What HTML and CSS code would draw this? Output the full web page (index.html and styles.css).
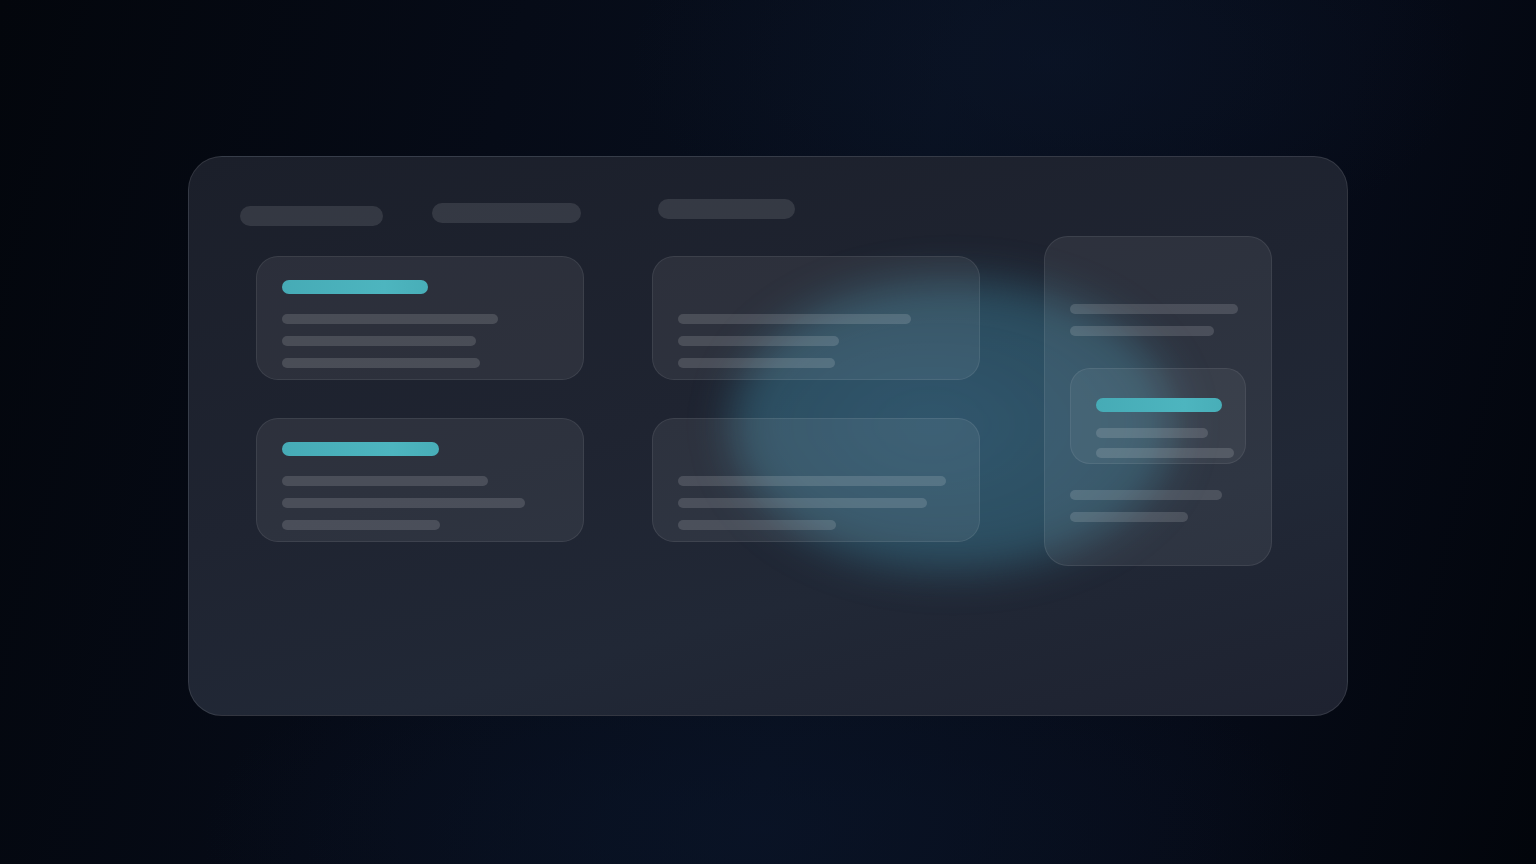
FILE: index.html
```html
<!DOCTYPE html>
<html lang="en">
<head>
<meta charset="utf-8">
<title>Dashboard skeleton</title>
<link rel="stylesheet" href="styles.css">
</head>
<body>
<main class="stage">
  <section class="panel">
    <div class="glow"></div>
    <header class="panel-head">
      <span class="pill pill-a"></span>
      <span class="pill pill-b"></span>
      <span class="pill pill-c"></span>
    </header>
    <div class="panel-body">
      <div class="col">
        <article class="card">
          <span class="accent" style="width:146px"></span>
          <span class="line first" style="width:216px"></span>
          <span class="line" style="width:194px"></span>
          <span class="line" style="width:198px"></span>
        </article>
        <article class="card">
          <span class="accent" style="width:157px"></span>
          <span class="line first" style="width:206px"></span>
          <span class="line" style="width:243px"></span>
          <span class="line" style="width:158px"></span>
        </article>
      </div>
      <div class="col col-mid">
        <article class="card">
          <span class="accent ghost"></span>
          <span class="line first" style="width:233px"></span>
          <span class="line" style="width:161px"></span>
          <span class="line" style="width:157px"></span>
        </article>
        <article class="card">
          <span class="accent ghost"></span>
          <span class="line first" style="width:268px"></span>
          <span class="line" style="width:249px"></span>
          <span class="line" style="width:158px"></span>
        </article>
      </div>
      <aside class="side">
        <span class="line" style="width:168px"></span>
        <span class="line" style="width:144px"></span>
        <div class="inner">
          <span class="accent" style="width:126px"></span>
          <span class="line first" style="width:112px"></span>
          <span class="line tight" style="width:138px"></span>
        </div>
        <span class="line after" style="width:152px"></span>
        <span class="line" style="width:118px"></span>
      </aside>
    </div>
  </section>
</main>
</body>
</html>
```

FILE: styles.css
```css
* { box-sizing: border-box; }

html, body {
  margin: 0;
  padding: 0;
  width: 1536px;
  height: 864px;
  overflow: hidden;
  font-family: "Inter", "Liberation Sans", sans-serif;
}

body {
  background:
    radial-gradient(ellipse 800px 300px at 760px 830px, rgba(10, 20, 40, 0.7), rgba(10, 20, 40, 0) 70%),
    radial-gradient(ellipse 600px 300px at 1050px 60px, rgba(12, 22, 42, 0.55), rgba(12, 22, 42, 0) 70%),
    linear-gradient(105deg, #03060c 0%, #060b17 30%, #08101f 55%, #060b18 78%, #02050b 100%);
}

.stage {
  display: flex;
  justify-content: center;
  padding-top: 156px;
}

.panel {
  position: relative;
  width: 1160px;
  height: 560px;
  border-radius: 34px;
  border: 1px solid rgba(255, 255, 255, 0.1);
  background: linear-gradient(165deg, #1b1f2a 0%, #1f2431 45%, #212836 70%, #1e2230 100%);
  overflow: hidden;
}

.glow {
  position: absolute;
  left: 542px;
  top: 122px;
  width: 445px;
  height: 292px;
  border-radius: 50%;
  background: radial-gradient(ellipse at 45% 50%, rgba(72, 150, 185, 0.44), rgba(62, 142, 168, 0.38) 65%, rgba(60, 140, 165, 0.26) 88%, rgba(60, 140, 165, 0.08) 100%);
  filter: blur(20px);
}

.panel-head {
  position: relative;
  display: flex;
  align-items: flex-start;
  padding: 42px 0 0 51px;
}

.pill {
  display: block;
  height: 20px;
  border-radius: 10px;
  background: rgba(255, 255, 255, 0.11);
}

.pill-a { width: 143px; margin-top: 7px; }
.pill-b { width: 149px; margin-top: 4px; margin-left: 49px; }
.pill-c { width: 137px; margin-left: 77px; }

.panel-body {
  position: relative;
  display: flex;
  align-items: flex-start;
  padding-left: 67px;
  margin-top: 10px;
}

.col {
  display: flex;
  flex-direction: column;
  gap: 38px;
  margin-top: 20px;
}

.col-mid { margin-left: 68px; }

.card {
  display: flex;
  flex-direction: column;
  align-items: flex-start;
  width: 328px;
  height: 124px;
  padding: 23px 25px;
  border-radius: 22px;
  border: 1px solid rgba(255, 255, 255, 0.08);
  background: rgba(255, 255, 255, 0.065);
}

.accent {
  display: block;
  height: 14px;
  border-radius: 7px;
  background: linear-gradient(90deg, #46abb6, #4db5bf 70%, #48aeb8);
  flex: none;
}

.accent.ghost { visibility: hidden; width: 10px; }

.line {
  display: block;
  height: 10px;
  border-radius: 5px;
  background: rgba(255, 255, 255, 0.14);
  margin-top: 12px;
  flex: none;
}

.line.first { margin-top: 20px; }

.side {
  display: flex;
  flex-direction: column;
  align-items: flex-start;
  width: 228px;
  height: 330px;
  margin-left: 64px;
  padding: 67px 25px 0;
  border-radius: 24px;
  border: 1px solid rgba(255, 255, 255, 0.08);
  background: rgba(255, 255, 255, 0.065);
}

.side > .line:first-child { margin-top: 0; }

.inner {
  display: flex;
  flex-direction: column;
  align-items: flex-start;
  width: 176px;
  height: 96px;
  margin-top: 32px;
  padding: 29px 25px 0;
  border-radius: 20px;
  border: 1px solid rgba(255, 255, 255, 0.07);
  background: rgba(255, 255, 255, 0.055);
}

.inner .line.first { margin-top: 16px; }
.inner .line.tight { margin-top: 10px; }

.side .line.after { margin-top: 26px; }
```
